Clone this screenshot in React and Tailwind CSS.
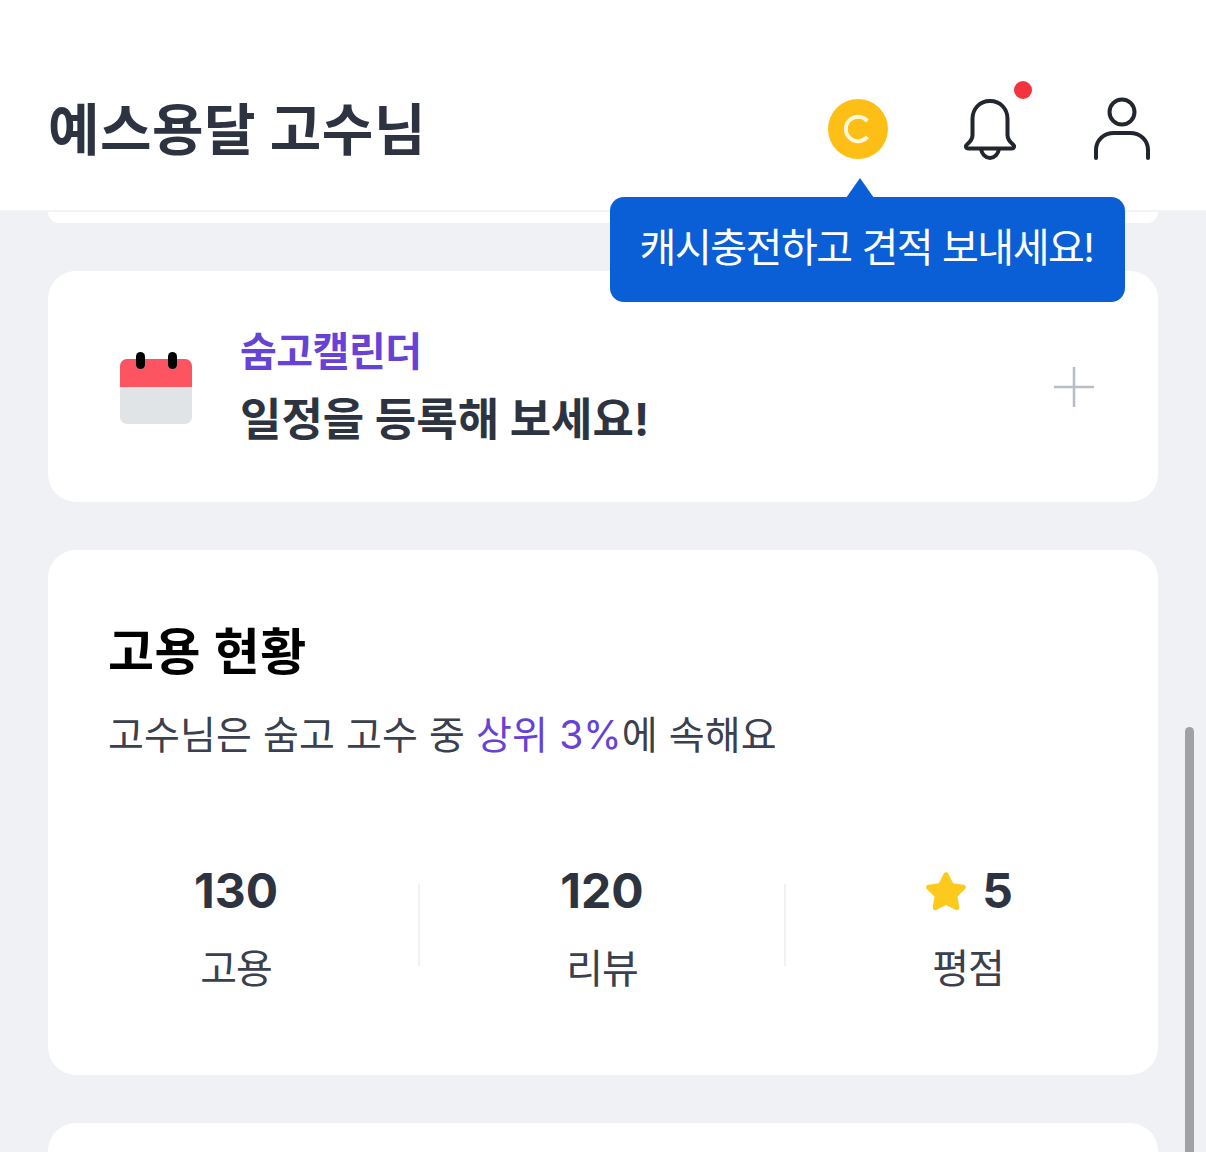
const FONT = "font-['Inter','Noto_Sans_CJK_KR',sans-serif]";

const StatItem = ({ value, label, star }) => (
  <div className="flex-1 flex flex-col items-center">
    <div className="flex items-center h-[48px] text-[48px] leading-[48px] font-bold text-[#2d3340]">
      {star && (
        <svg className="w-[46px] h-[46px] mr-[13px]" viewBox="0 0 24 24">
          <path
            d="M12 2.200c.6 0 1 .3 1.300.9l2.400 4.900 5.400.8c1.300.2 1.700 1.400.8 2.300l-3.900 3.800.9 5.400c.2 1.300-1 2.100-2.100 1.500L12 19.300l-4.800 2.500c-1.100.6-2.300-.2-2.100-1.500l.9-5.400-3.900-3.800c-.9-.9-.5-2.100.8-2.300l5.400-.8 2.400-4.900c.3-.6.700-.9 1.300-.9z"
            fill="#fdc91d"
          />
        </svg>
      )}
      {value}
    </div>
    <div className="mt-[32px] text-[40px] leading-[44px] tracking-[-1px] text-[#3a404d]">
      {label}
    </div>
  </div>
);

export default function App() {
  return (
    <div className={`relative w-[1206px] h-[1152px] overflow-hidden bg-[#eff1f5] ${FONT}`}>
      {/* Header */}
      <header className="h-[212px] bg-white border-b-2 border-[#f2f3f5] flex items-end pb-[48px] pl-[48px] pr-[54px]">
        <h1 className="text-[56px] leading-[64px] font-bold tracking-[0.5px] text-[#2d3340]">
          예스용달 고수님
        </h1>
        <div className="ml-auto flex items-center">
          <div className="w-[60px] h-[60px] rounded-full bg-[#fdbf16] flex items-center justify-center">
            <svg className="w-[32px] h-[32px]" viewBox="0 0 32 32" fill="none">
              <path
                d="M25.350 8.160A12.200 12.200 0 1 0 25.350 23.840"
                stroke="#fff7dc"
                strokeWidth="4"
              />
            </svg>
          </div>
          <div className="relative ml-[72px] w-[60px] h-[64px]">
            <svg className="w-[60px] h-[64px]" viewBox="0 0 60 64" fill="none">
              <path
                d="M30 4c-10.500 0-17.500 8-17.500 18v16c0 4-2.500 7-5.500 9.500-2 1.700-1 4 1.500 4h43c2.500 0 3.500-2.300 1.500-4-3-2.500-5.500-5.500-5.500-9.500V22C47.500 12 40.500 4 30 4z"
                stroke="#22262f"
                strokeWidth="4"
                strokeLinejoin="round"
              />
              <path d="M21 52c.8 5 4.500 9 9 9s8.200-4 9-9" stroke="#22262f" strokeWidth="4" />
            </svg>
            <span className="absolute top-[-16px] left-[54px] w-[18px] h-[18px] rounded-full bg-[#f4333f]" />
          </div>
          <svg className="ml-[72px] w-[60px] h-[66px]" viewBox="0 0 60 66" fill="none">
            <circle cx="30" cy="16" r="12.500" stroke="#22262f" strokeWidth="4" />
            <path
              d="M4 62v-8C4 44 12 37 22 37h16c10 0 18 7 18 17v8"
              stroke="#22262f"
              strokeWidth="4"
              strokeLinecap="round"
            />
          </svg>
        </div>
      </header>

      {/* Cards */}
      <div className="px-[48px] flex flex-col gap-[48px]">
        <div className="h-[11px] bg-white rounded-b-[28px]" />

        <section className="h-[231px] bg-white rounded-[28px] flex items-center pl-[72px] pr-[64px]">
          <div className="w-[72px] h-[65px] mt-[10px] rounded-[7px] overflow-hidden bg-[#e1e4e7]">
            <div className="h-[28px] bg-[#fc5460]" />
          </div>
          <div className="ml-[48px]">
            <div className="text-[40px] leading-[52px] font-bold tracking-[-0.5px] text-[#6642d6]">
              숨고캘린더
            </div>
            <div className="mt-[14px] text-[45px] leading-[56px] font-bold text-[#2d3340]">
              일정을 등록해 보세요!
            </div>
          </div>
          <svg className="ml-auto w-[40px] h-[40px]" viewBox="0 0 40 40">
            <path d="M20 0v40M0 20h40" stroke="#b9bdc5" strokeWidth="2.500" />
          </svg>
        </section>

        <section className="h-[525px] bg-white rounded-[28px] pt-[72px] px-[60px]">
          <h2 className="text-[50px] leading-[60px] font-bold tracking-[0.6px] text-black">
            고용 현황
          </h2>
          <p className="mt-[28px] text-[39px] leading-[50px] tracking-[0.1px] text-[#3a404d]">
            고수님은 숨고 고수 중 <span className="text-[#6642d6]">상위 3%</span>에 속해요
          </p>
          <div className="mt-[107px] flex items-start -ml-[54px] -mr-[52px]">
            <StatItem value="130" label="고용" />
            <div className="w-[2px] h-[82px] mt-[17px] bg-[#eff1f5]" />
            <StatItem value="120" label="리뷰" />
            <div className="w-[2px] h-[82px] mt-[17px] bg-[#eff1f5]" />
            <StatItem value="5" label="평점" star />
          </div>
        </section>

        <section className="h-[80px] bg-white rounded-[28px]" />
      </div>

      {/* Tooltip */}
      <div className="absolute left-[610px] top-[197px] w-[515px] h-[105px] rounded-[14px] bg-[#0b5fd6] flex items-center justify-center">
        <span className="absolute -top-[19px] left-[236px] w-0 h-0 border-x-[14px] border-x-transparent border-b-[20px] border-b-[#0b5fd6]" />
        <span className="-mt-[4px] -ml-[2px] text-[40px] leading-[50px] tracking-[-1.450px] text-white whitespace-nowrap">
          캐시충전하고 견적 보내세요!
        </span>
      </div>

      {/* Calendar rings */}
      <span className="absolute left-[136px] top-[352px] w-[9px] h-[17px] rounded-full bg-black" />
      <span className="absolute left-[168px] top-[352px] w-[9px] h-[17px] rounded-full bg-black" />

      {/* Scrollbar */}
      <div className="absolute left-[1185px] top-[727px] w-[9px] h-[440px] rounded-full bg-[#a0a1a5]" />
    </div>
  );
}
